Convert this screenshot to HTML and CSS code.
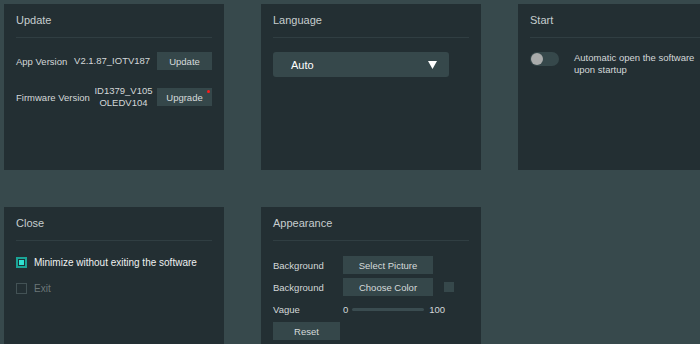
FILE: index.html
```html
<!DOCTYPE html>
<html lang="en">
<head>
    <meta charset="UTF-8">
    <meta name="viewport" content="width=device-width, initial-scale=1.0">
    <title>Settings</title>
    <link rel="stylesheet" href="styles.css">
</head>
<body>

    <div class="settings">

        <div class="panel">
            <div class="panel-title">Update</div>
            <div class="panel-body update-body">
                <div class="version-row">
                    <span class="label">App Version</span>
                    <span class="value">V2.1.87_IOTV187</span>
                    <button class="btn btn-small">Update</button>
                </div>
                <div class="version-row">
                    <span class="label">Firmware Version</span>
                    <span class="value">ID1379_V105<br>OLEDV104</span>
                    <button class="btn btn-small has-dot">Upgrade</button>
                </div>
            </div>
        </div>

        <div class="panel">
            <div class="panel-title">Language</div>
            <div class="panel-body">
                <div class="select">
                    <span>Auto</span>
                    <svg class="select-arrow" width="9" height="8" viewBox="0 0 9 8"><path d="M0 0 H9 L4.5 8 Z" fill="#fff"/></svg>
                </div>
            </div>
        </div>

        <div class="panel">
            <div class="panel-title">Start</div>
            <div class="panel-body">
                <div class="start-row">
                    <span class="toggle"><span class="knob"></span></span>
                    <span class="start-text">Automatic open the software upon startup</span>
                </div>
            </div>
        </div>

        <div class="panel">
            <div class="panel-title">Close</div>
            <div class="panel-body close-body">
                <div class="check-row">
                    <span class="check checked"></span>
                    <span class="check-label">Minimize without exiting the software</span>
                </div>
                <div class="check-row">
                    <span class="check"></span>
                    <span class="check-label muted">Exit</span>
                </div>
            </div>
        </div>

        <div class="panel">
            <div class="panel-title">Appearance</div>
            <div class="panel-body look-body">
                <div class="look-row">
                    <span class="look-label">Background</span>
                    <button class="btn btn-wide">Select Picture</button>
                </div>
                <div class="look-row">
                    <span class="look-label">Background</span>
                    <button class="btn btn-wide">Choose Color</button>
                    <span class="swatch"></span>
                </div>
                <div class="look-row">
                    <span class="look-label">Vague</span>
                    <span class="range-num">0</span>
                    <span class="range-line"></span>
                    <span class="range-num">100</span>
                </div>
                <div class="look-row">
                    <button class="btn btn-reset">Reset</button>
                </div>
            </div>
        </div>

    </div>

</body>
</html>
```

FILE: styles.css
```css
body {
    margin: 0;
    width: 700px;
    height: 344px;
    overflow: hidden;
    background-color: #37494c;
    font-family: "Liberation Sans", Arial, sans-serif;
    font-size: 9.5px;
    color: #d3d8d9;
}

.settings {
    display: grid;
    grid-template-columns: repeat(3, 220px);
    grid-auto-rows: 166px;
    column-gap: 37px;
    row-gap: 37px;
    padding: 4px 0 0 4px;
}

.panel {
    background-color: #232f33;
    padding: 0 12px;
}

.panel-title {
    height: 33px;
    line-height: 33px;
    font-size: 11px;
    color: #c6cdce;
    border-bottom: 1px solid #303e42;
}

/* update */
.update-body {
    padding-top: 14px;
    display: flex;
    flex-direction: column;
    gap: 15px;
}

.version-row {
    display: flex;
    align-items: center;
}

.value {
    flex: 1;
    text-align: center;
    line-height: 12px;
}

.btn {
    font-family: inherit;
    font-size: 9.5px;
    color: #d6dbdb;
    background-color: #35474a;
    border: none;
    padding: 0;
    height: 18px;
    cursor: pointer;
}

.btn-small {
    width: 55px;
}

.has-dot {
    position: relative;
}

.has-dot::after {
    content: "";
    position: absolute;
    top: 2px;
    right: 2px;
    width: 3px;
    height: 3px;
    border-radius: 50%;
    background-color: #ff1a1a;
}

/* language */
.select {
    margin-top: 14px;
    width: 176px;
    height: 25px;
    box-sizing: border-box;
    border-radius: 3px;
    background-color: #36484b;
    display: flex;
    align-items: center;
    justify-content: space-between;
    padding: 0 12px 0 18px;
    font-size: 11px;
    color: #fff;
}

/* start */
.start-row {
    margin-top: 14px;
    display: flex;
    align-items: flex-start;
    gap: 15px;
}

.toggle {
    width: 29px;
    height: 14px;
    border-radius: 7px;
    background-color: #36484b;
    display: flex;
    align-items: center;
    padding-left: 1px;
    box-sizing: border-box;
    flex-shrink: 0;
}

.knob {
    width: 12px;
    height: 12px;
    border-radius: 50%;
    background-color: #a9abab;
}

.start-text {
    width: 136px;
    line-height: 12px;
}

/* close */
.close-body {
    padding-top: 14px;
    display: flex;
    flex-direction: column;
    gap: 12px;
}

.check-row {
    display: flex;
    align-items: center;
    gap: 7px;
    height: 14px;
}

.check {
    width: 11px;
    height: 11px;
    box-sizing: border-box;
    border: 1px solid #435255;
}

.check.checked {
    border: 2px solid #1ba597;
    background-color: #30e2d2;
    box-shadow: inset 0 0 0 1px #1e3236;
}

.check-label {
    font-size: 10px;
    color: #eef1f1;
}

.muted {
    color: #6b7678;
}

/* appearance */
.look-body {
    padding-top: 15px;
    display: flex;
    flex-direction: column;
    gap: 4px;
}

.look-row {
    display: flex;
    align-items: center;
    height: 18px;
}

.look-label {
    width: 70px;
}

.btn-wide {
    width: 90px;
}

.swatch {
    margin-left: 11px;
    width: 10px;
    height: 10px;
    background-color: #36484b;
}

.range-line {
    width: 72px;
    height: 3px;
    border-radius: 2px;
    background-color: #3a4c50;
    margin: 0 5px 0 4px;
}

.btn-reset {
    width: 67px;
}
```
